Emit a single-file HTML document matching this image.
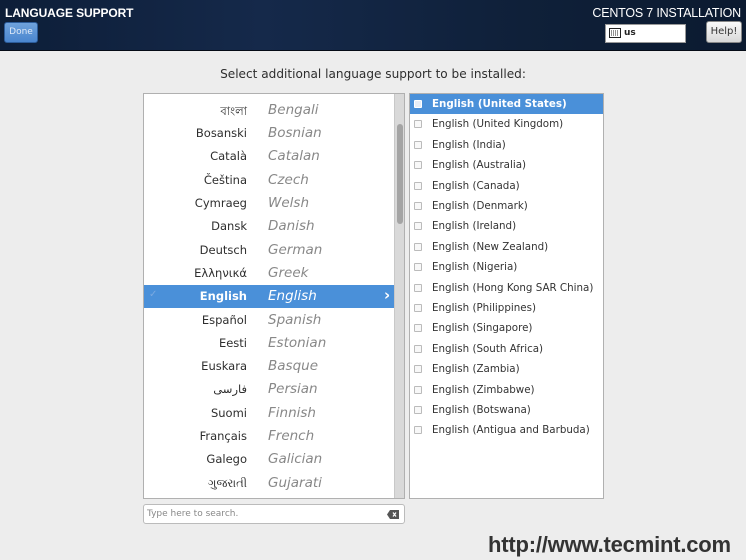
<!DOCTYPE html>
<html><head><meta charset="utf-8"><style>
*{margin:0;padding:0;box-sizing:border-box}
body{width:746px;height:560px;background:#ededed;font-family:"DejaVu Sans","Liberation Sans",sans-serif;position:relative;overflow:hidden}
.hdr{position:absolute;left:0;top:0;width:746px;height:51px;background:linear-gradient(90deg,#0d1e38 0%,#15294a 35%,#0f2039 70%,#0b1a30 100%);border-bottom:1px solid #050b16}
.t1{position:absolute;left:5px;top:6px;color:#fff;font-size:12px;font-weight:bold;font-family:"Liberation Sans",sans-serif;letter-spacing:-0.1px}
.t2{position:absolute;right:5px;top:6px;color:#fff;font-size:12.5px;font-family:"Liberation Sans",sans-serif;letter-spacing:-0.2px}
.done{position:absolute;left:4px;top:22px;width:34px;height:21px;background:linear-gradient(#6fa2dc,#4a86cf);border:1px solid #2c5c9a;border-radius:3px;color:#dfe9f7;font-size:9px;text-align:center;line-height:19px}
.kb{position:absolute;left:605px;top:24px;width:81px;height:19px;background:#fff;border:1px solid #999}
.kb span{position:absolute;left:18px;top:3px;font-size:9px;font-weight:bold;color:#222}
.help{position:absolute;left:706px;top:21px;width:36px;height:22px;background:linear-gradient(#fafafa,#d8d8d8);border:1px solid #888;border-radius:3px;font-size:10px;color:#333;text-align:center;line-height:20px}
.ttl{position:absolute;left:0;width:746px;top:67px;text-align:center;font-size:12.1px;color:#2e2e2e}
.lbox{position:absolute;left:143px;top:93px;width:262px;height:406px;background:#fff;border:1px solid #b0b0b0;overflow:hidden}
.row{position:absolute;left:0;width:250px;height:23px;font-size:11.5px;color:#2e2e2e}
.row .n{position:absolute;right:147px;top:4px;white-space:nowrap}
.row .e{position:absolute;left:124px;top:3px;font-style:italic;color:#888;font-size:13.5px}
.row.sel{background:#4a90d9;color:#fff}
.row.sel .n{font-weight:bold}
.row.sel .e{color:#fff}
.sb{position:absolute;left:250px;top:0;width:11px;height:406px;background:#d9d9d9;border-left:1px solid #c8c8c8}
.th{position:absolute;left:2px;top:30px;width:6px;height:100px;background:#a4a4a4;border-radius:3px}
.rbox{position:absolute;left:409px;top:93px;width:195px;height:406px;background:#fff;border:1px solid #b0b0b0;overflow:hidden}
.rr{position:absolute;left:0;width:193px;height:20px;font-size:10.3px;color:#333}
.rr span{position:absolute;left:22px;top:4px;white-space:nowrap}
.rr i{position:absolute;left:4px;top:6px;width:8px;height:8px;border:1px solid #bbb;border-radius:1px;background:#f8f8f8}
.rr.sel{background:#4a90d9;color:#fff;font-weight:bold}
.rr.sel i{background:#e8eef7;border-color:#fff}
.srch{position:absolute;left:143px;top:504px;width:262px;height:20px;background:#fff;border:1px solid #bbb;border-radius:3px;font-size:9px;color:#888}
.srch span{position:absolute;left:3px;top:4px}
.wm{position:absolute;left:488px;top:532px;font-family:"Liberation Sans",sans-serif;font-weight:bold;font-size:22px;color:#333;letter-spacing:-0.2px}
</style></head><body>
<div class="hdr">
<div class="t1">LANGUAGE SUPPORT</div>
<div class="t2">CENTOS 7 INSTALLATION</div>
<div class="done">Done</div>
<div class="kb"><svg style="position:absolute;left:3px;top:3px" width="12" height="11"><rect x="0.5" y="0.5" width="11" height="9" fill="#fff" stroke="#222"/><path d="M2 3h8M2 5h8M2 7h8" stroke="#222" stroke-dasharray="1 1"/></svg><span>us</span></div>
<div class="help">Help!</div>
</div>
<div class="ttl">Select additional language support to be installed:</div>
<div class="lbox">
<div class="row" style="top:5px"><span class="n">বাংলা</span><span class="e">Bengali</span></div>
<div class="row" style="top:28px"><span class="n">Bosanski</span><span class="e">Bosnian</span></div>
<div class="row" style="top:51px"><span class="n">Català</span><span class="e">Catalan</span></div>
<div class="row" style="top:75px"><span class="n">Čeština</span><span class="e">Czech</span></div>
<div class="row" style="top:98px"><span class="n">Cymraeg</span><span class="e">Welsh</span></div>
<div class="row" style="top:121px"><span class="n">Dansk</span><span class="e">Danish</span></div>
<div class="row" style="top:145px"><span class="n">Deutsch</span><span class="e">German</span></div>
<div class="row" style="top:168px"><span class="n">Ελληνικά</span><span class="e">Greek</span></div>
<div class="row sel" style="top:191px"><span style="position:absolute;left:5px;top:4px;color:#7aa9e0;font-size:10px">✓</span><span class="n">English</span><span class="e">English</span><span style="position:absolute;left:240px;top:1px;font-size:15px;font-weight:bold">›</span></div>
<div class="row" style="top:215px"><span class="n">Español</span><span class="e">Spanish</span></div>
<div class="row" style="top:238px"><span class="n">Eesti</span><span class="e">Estonian</span></div>
<div class="row" style="top:261px"><span class="n">Euskara</span><span class="e">Basque</span></div>
<div class="row" style="top:284px"><span class="n">فارسی</span><span class="e">Persian</span></div>
<div class="row" style="top:308px"><span class="n">Suomi</span><span class="e">Finnish</span></div>
<div class="row" style="top:331px"><span class="n">Français</span><span class="e">French</span></div>
<div class="row" style="top:354px"><span class="n">Galego</span><span class="e">Galician</span></div>
<div class="row" style="top:378px"><span class="n">ગુજરાતી</span><span class="e">Gujarati</span></div>
<div class="sb"><div class="th"></div></div>
</div>
<div class="rbox">
<div class="rr sel" style="top:0px"><i></i><span>English (United States)</span></div>
<div class="rr" style="top:20.4px"><i></i><span>English (United Kingdom)</span></div>
<div class="rr" style="top:40.8px"><i></i><span>English (India)</span></div>
<div class="rr" style="top:61.2px"><i></i><span>English (Australia)</span></div>
<div class="rr" style="top:81.6px"><i></i><span>English (Canada)</span></div>
<div class="rr" style="top:102px"><i></i><span>English (Denmark)</span></div>
<div class="rr" style="top:122.4px"><i></i><span>English (Ireland)</span></div>
<div class="rr" style="top:142.8px"><i></i><span>English (New Zealand)</span></div>
<div class="rr" style="top:163.2px"><i></i><span>English (Nigeria)</span></div>
<div class="rr" style="top:183.6px"><i></i><span>English (Hong Kong SAR China)</span></div>
<div class="rr" style="top:204px"><i></i><span>English (Philippines)</span></div>
<div class="rr" style="top:224.4px"><i></i><span>English (Singapore)</span></div>
<div class="rr" style="top:244.8px"><i></i><span>English (South Africa)</span></div>
<div class="rr" style="top:265.2px"><i></i><span>English (Zambia)</span></div>
<div class="rr" style="top:285.6px"><i></i><span>English (Zimbabwe)</span></div>
<div class="rr" style="top:306px"><i></i><span>English (Botswana)</span></div>
<div class="rr" style="top:326.4px"><i></i><span>English (Antigua and Barbuda)</span></div>
</div>
<div class="srch"><span>Type here to search.</span><svg style="position:absolute;left:243px;top:5px" width="12" height="9"><path d="M3 0H12V9H3L0 4.5Z" fill="#555"/><path d="M6 2.5l3 4M9 2.5l-3 4" stroke="#fff" stroke-width="1.2"/></svg></div>
<div class="wm">http://www.tecmint.com</div>
</body></html>
